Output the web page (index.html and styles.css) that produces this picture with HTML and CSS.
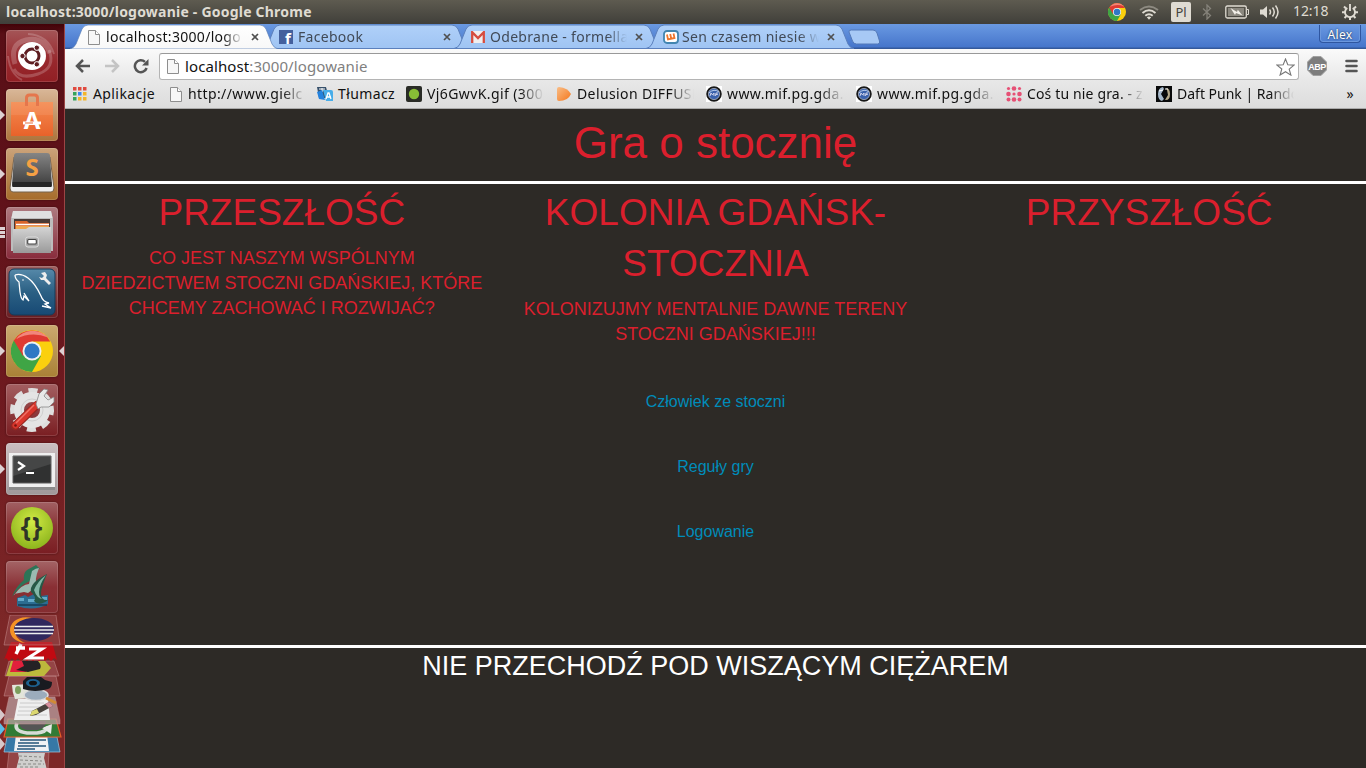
FILE: index.html
```html
<!DOCTYPE html>
<html lang="pl">
<head>
<meta charset="utf-8">
<title>Gra o stocznię</title>
<link rel="stylesheet" href="styles.css">
</head>
<body>
<svg width="0" height="0" class="defs">
  <defs>
    <linearGradient id="tabFill" x1="0" y1="0" x2="0" y2="1"><stop offset="0" stop-color="#b0d0f9"/><stop offset="1" stop-color="#9fc4f3"/></linearGradient>
    <linearGradient id="tabOn" x1="0" y1="0" x2="0" y2="1"><stop offset="0" stop-color="#fff"/><stop offset="1" stop-color="#f8f8f8"/></linearGradient>
    <linearGradient id="bag" x1="0" y1="0" x2="0" y2="1"><stop offset="0" stop-color="#f58b51"/><stop offset="1" stop-color="#e8622a"/></linearGradient>
    <linearGradient id="dark" x1="0" y1="0" x2="0" y2="1"><stop offset="0" stop-color="#858585"/><stop offset="1" stop-color="#3a3a3a"/></linearGradient>
    <linearGradient id="silver" x1="0" y1="0" x2="0" y2="1"><stop offset="0" stop-color="#d4d4d4"/><stop offset="1" stop-color="#9a9a9a"/></linearGradient>
    <linearGradient id="blue" x1="0" y1="0" x2="0" y2="1"><stop offset="0" stop-color="#5689a9"/><stop offset=".5" stop-color="#2b6084"/><stop offset="1" stop-color="#174974"/></linearGradient>
    <radialGradient id="lime" cx=".5" cy=".35" r=".65"><stop offset="0" stop-color="#d2ea45"/><stop offset="1" stop-color="#8db51d"/></radialGradient>
    <linearGradient id="orange" x1="0" y1="0" x2="1" y2="1"><stop offset="0" stop-color="#f9bd86"/><stop offset="1" stop-color="#f4771c"/></linearGradient>
    <symbol id="page" viewBox="0 0 12 15"><path d="M.5.5h7l4 4v10H.5z" fill="#f7f7f7" stroke="#8e8e8e"/><path d="M7.500.5v4h4" fill="#fff" stroke="#8e8e8e"/></symbol>
    <symbol id="chrome" viewBox="0 0 42 42">
      <circle cx="21" cy="21" r="21" fill="#fbd00e"/>
      <path d="M21 21L2.800 10.500A21 21 0 0 0 21 42L30 26z" fill="#3fa545"/>
      <path d="M2.800 10.500A21 21 0 0 1 39.200 11.500H21L12 26z" fill="#df3b32"/>
      <path d="M5 9A21 21 0 0 1 37 7.500Q21 1 5 9" fill="#f2867b"/>
      <circle cx="21" cy="21" r="9.500" fill="#f1f1f1"/><circle cx="21" cy="21" r="7.600" fill="#2f78c4"/>
    </symbol>
    <symbol id="mif" viewBox="0 0 16 16"><path d="M0 0h16v16H0z" fill="#fff"/><circle cx="8" cy="8" r="6.800" fill="#3b62ac" stroke="#171717" stroke-width="2"/><path d="M3 7q5-5 10-1" fill="none" stroke="#b9cdec"/><circle cx="8" cy="8" r="5.600" fill="none" stroke="#b9bcc4" stroke-width=".7"/><path d="M4 10l1-3 1.500 2L8 7v3M9.500 10l.5-3h2M9.800 8.500h2" fill="none" stroke="#dde" stroke-width=".9"/></symbol>
    <symbol id="tabShape" viewBox="0 0 208 25"><path d="M0 24.500Q4 24 6 20L12 5Q14 1 18 1H190Q194 1 196 5L202 20Q204 24 208 24.500z" fill="url(#tabFill)" stroke="#5b80bd"/></symbol>
  </defs>
</svg>

<header class="panel">
  <span class="panel-title">localhost:3000/logowanie - Google Chrome</span>
  <div class="tray">
    <svg class="i-chrome" width="18" height="18"><use href="#chrome"/></svg>
    <svg class="i-wifi" width="20" height="15" viewBox="0 0 20 15" fill="none" stroke-width="1.900"><path d="M1 5Q10-2 19 5" stroke="#8d8a81"/><path d="M3.500 8Q10 2.500 16.500 8M6.300 10.800Q10 7.500 13.700 10.800" stroke="#dfdbd2"/><path d="M7.800 12.200L10 14.800l2.200-2.600q-2.200-1.500-4.400 0z" fill="#dfdbd2"/></svg>
    <span class="lang">Pl</span>
    <svg class="i-bt" width="10" height="16" viewBox="0 0 10 16" fill="none" stroke="#85827a" stroke-width="1.300"><path d="M1 4.500l7.500 7L5 15V1l3.500 3.500-7.500 7"/></svg>
    <svg class="i-bat" width="24" height="14" viewBox="0 0 24 14"><rect x=".8" y="1" width="20.500" height="12" rx="1.500" fill="none" stroke="#dfdbd2" stroke-width="1.300"/><path d="M3 3h16v8H3z" fill="#8b887f"/><path d="M22 4.500h1.500v5H22" fill="none" stroke="#dfdbd2"/><path d="M5.500 3l6.500 4 .8-2.300L17.500 10.500 11 8l-1 2z" fill="#f2efe8"/></svg>
    <svg class="i-vol" width="20" height="16" viewBox="0 0 20 16" fill="none" stroke="#dfdbd2" stroke-width="1.500"><path d="M0 5.500h3l4-3.500v12l-4-3.500H0z" fill="#dfdbd2" stroke="none"/><path d="M9.500 5.500q2 2.500 0 5M12.500 3.500q3.500 4.500 0 9M15.500 1.500q5 6.500 0 13"/></svg>
    <span class="clock">12:18</span>
    <svg class="i-gear" width="16" height="16" viewBox="0 0 16 16" fill="none" stroke="#dfdbd2"><path d="M5.300 4A5 5 0 1 0 10.700 4" stroke-width="1.900"/><path d="M8 0v7" stroke-width="1.900"/><path d="M2 2.500l2 2M14 2.500l-2 2M0 8.300h3M16 8.300h-3M2.500 14l2-2M13.500 14l-2-2M8 13v3" stroke-width="2"/></svg>
  </div>
</header>

<div class="desktop">
<nav class="launcher">
  <div class="tile t-dash"><svg viewBox="0 0 52 52"><g fill="none" stroke="#fff" stroke-opacity=".2"><path d="M9 34Q3 14 20 10t24 13" stroke-width="5"/><path d="M43 20q7 18-11 24T8 39" stroke-width="3"/><path d="M22 4q20 1 26 20M2 26q2 18 14 24" stroke-width="2"/></g><circle cx="26" cy="26" r="14" fill="#fff"/><circle cx="26" cy="26" r="7" fill="none" stroke="#5e1d21" stroke-width="3"/><g fill="#5e1d21" stroke="#fff" stroke-width="1"><circle cx="16.500" cy="26" r="2.700"/><circle cx="30.800" cy="17.700" r="2.700"/><circle cx="30.800" cy="34.300" r="2.700"/></g></svg></div>
  <div class="tile t-soft"><i class="arrow"></i><svg viewBox="0 0 52 52"><path d="M5 13h42v34H5z" fill="url(#bag)"/><path d="M5 13h42v13H5z" fill="#fff" opacity=".08"/><path d="M20.500 17V9q0-3 3-3h5q3 0 3 3v8" fill="none" stroke="#e5764c" stroke-width="3"/><text x="26" y="40" text-anchor="middle" class="g-a" fill="#fff">A</text><path d="M17 32.500h18v3H17z" fill="#fff"/><path d="M19 33.500h8v1h-8z" fill="#e8703c"/></svg></div>
  <div class="tile t-sub"><i class="arrow"></i><svg viewBox="0 0 52 52"><path d="M8 9h36l4 31q0 4-3 4H7q-3 0-3-4z" fill="#eee" stroke="#77624b"/><path d="M11 5h30q3 0 3 3l2 29q0 2-3 2H9q-3 0-3-2L8 8q0-3 3-3z" fill="url(#dark)"/><path d="M6.500 34h39v5h-39z" fill="#262626"/><text x="26" y="28" text-anchor="middle" class="g-s">S</text></svg></div>
  <div class="tile t-files"><i class="arrow triple"></i><svg viewBox="0 0 52 52"><path d="M7 4h38l2 8v32H5V12z" fill="#bdbdbd"/><path d="M7 4h38l1.500 7h-41z" fill="#e0e0e0"/><path d="M8 12h36v13H8z" fill="#4a3a35"/><path d="M9 14h12l2 2h20v9H9z" fill="#d9652b"/><path d="M10 17.500h33" stroke="#fff" stroke-width="1.500"/><path d="M10 19h33v4H10z" fill="#eea84f"/><path d="M7 22h13l3-2h22v26H7z" fill="url(#silver)"/><rect x="19.500" y="30" width="13" height="10" rx="2.500" fill="#a9a9a9" stroke="#ddd"/><rect x="21.700" y="32.500" width="8.600" height="4.500" rx="1" fill="#fff" stroke="#444" stroke-width="1.100"/></svg></div>
  <div class="tile t-sql"><svg viewBox="0 0 52 52"><rect x="3" y="3" width="46" height="46" rx="5" fill="url(#blue)" stroke="#173a57"/><g fill="none" stroke="#fff" stroke-width="1.300"><path d="M9 9q6-2 13 3t13 18q2 6 8 7l-4 1 6 4-9-2M9 9q0 4 4 7l1 10q1 7 3 8l1-4 5 5-5-8"/></g><path d="M35 7l4-1 2 3-1 3 5 5-2 2-5-5-3 0-2-3 3 1 2-2z" fill="#eee"/><circle cx="17" cy="14" r=".8" fill="#fff"/></svg></div>
  <div class="tile t-chrome"><i class="arrow"></i><i class="arrow right"></i><svg viewBox="0 0 52 52"><use href="#chrome" x="5" y="5" width="42" height="42"/></svg></div>
  <div class="tile t-cfg"><svg viewBox="0 0 52 52"><g transform="rotate(-12 26 26)"><circle cx="26" cy="26" r="18.500" fill="none" stroke="#dedede" stroke-width="7" stroke-dasharray="8.500 6.030"/></g><circle cx="26" cy="26" r="13" fill="none" stroke="#e4e4e4" stroke-width="10"/><circle cx="26" cy="26" r="11" fill="none" stroke="#cfcfcf"/><path d="M9 42L31 21" stroke="#962721" stroke-width="8" stroke-linecap="round"/><path d="M9.500 41.500L31 20.500" stroke="#d9362c" stroke-width="6" stroke-linecap="round"/><path d="M10 39L28 21" stroke="#ef7267" stroke-width="1.500"/><path d="M30 20l3-10 5-5 4 1-4 6 4 4 6-3v5l-5 5-8 0-3 2z" fill="#e8e8e8" stroke="#888" stroke-width=".8"/><circle cx="9.500" cy="41.500" r="1.300" fill="#76150f"/></svg></div>
  <div class="tile t-term"><i class="arrow"></i><svg viewBox="0 0 52 52"><path d="M3 10h46v37H3z" fill="#8a8a8a"/><path d="M3 10h46v34H3z" fill="#efefef"/><path d="M7 13h38v27H7z" fill="#303131" stroke="#5d5d5d"/><path d="M7 13h38v8L7 33z" fill="#fff" opacity=".1"/><path d="M12 19l6 4-6 4M20 30h8" fill="none" stroke="#fff" stroke-width="2.200"/></svg></div>
  <div class="tile t-brac"><svg viewBox="0 0 52 52"><circle cx="26" cy="26" r="21" fill="url(#lime)"/><text x="26" y="34" text-anchor="middle" class="g-b">{}</text></svg></div>
  <div class="tile t-drag"><svg viewBox="0 0 52 52"><path d="M11 37l8-3 3 2 8-4 5 3 7-1v9q-14 8-31 2z" fill="#2b6d91"/><path d="M12 37h6v3h-6zM22 38h7v3h-7zM34 36h7v3h-7z" fill="#64aac9"/><path d="M12 44h29" stroke="#153e58" stroke-width="1.500"/><path d="M6 36Q10 25 18 19q-1-7 3-10L30 4l4 4-6 1q-3 5-4 11-10 4-18 16z" fill="#2c7457"/><path d="M8 34q8-11 15-11l3-13q4-3 7-3-5 12-2 18l-9 7-4-1-10 2z" fill="#9bbab1"/><path d="M25 31q-2-9 16-18-6 14-6 19 0 8 7 7-9 7-14 1 3-4-3-9z" fill="#265846"/><path d="M28 29q3-8 12-15-7 10-7 17 0 6 4 7-6 0-9-9z" fill="#83b7a7"/></svg></div>
  <svg class="stack" viewBox="0 0 64 155" width="64" height="155">
    <path d="M9 137h40l-1 18H7z" class="glass"/><path d="M18 138h27l-1 5 3 12H16l3-12z" fill="#cfcfcd"/><path d="M19 141l22 1M20 145l22 1M18 149h26M20 152h20" stroke="#898985" stroke-dasharray="3 2"/>
    <path d="M7 122h50l3 15H4z" fill="#3678a6" stroke="#9fcae3" stroke-width=".7"/><path d="M16 119h31l2 17H14z" fill="#f0f2f4"/><path d="M20 125h26M18 128h21M18 131h28M17 134h18" stroke="#23557a" stroke-width="1.400"/>
    <path d="M8 104h48l5 18H4z" fill="#327b35" stroke="#e65b26" stroke-width="1.200"/><path d="M17 108q-4 8 10 10h10q9-1 11-6" fill="none" stroke="#d6dcd6" stroke-width="3.500"/><path d="M42 113l10-4-1 10z" fill="#e5e8e5"/><path d="M20 106h26q0 7-8 9H26q-8-2-6-9z" fill="#555"/>
    <path d="M9 82h46l5 23v4H4v-4z" class="glass light"/><path d="M18 84h30l2 21H14z" fill="#efefef"/><path d="M20 88h24M19 92h22M18 96h15M17 100h30" stroke="#c2c2c2" stroke-width=".8"/><path d="M30 101l2-5 17-9 4 4-17 9z" fill="#47423c"/><path d="M30 101l2-5 5-2 2 4z" fill="#dcd870"/><path d="M45 89l4-2 4 4-4 2z" fill="#d58e9b"/>
    <path d="M9 61h47l4 20H4z" class="glass"/><path d="M12 70l18-1 2 14-17 1q-3-7-3-14z" fill="#e3e5da"/><ellipse cx="18" cy="75" rx="3" ry="4" fill="#7c9e5c"/>
    <ellipse cx="36" cy="80" rx="12" ry="5.500" fill="#9cacbc" stroke="#ddd" stroke-width="1.500"/><path d="M46 83l10 5" stroke="#d08a35" stroke-width="3"/>
    <path d="M23 66l4-4h14l4 3 7 2q0 6-4 7-13 4-25 0z" fill="#191b20"/><ellipse cx="33" cy="68" rx="7" ry="4" fill="#1d618f"/><ellipse cx="33" cy="68" rx="4" ry="2.300" fill="#111"/>
    <path d="M9 46h45l5 15H5z" class="glass"/><path d="M11 46h34l6 7-7 8H6z" fill="#bdb93c"/><path d="M13 46h17l-4 11H10z" fill="#e1203c"/><path d="M22 46h16q4 4 2 8l-12 3-12-2 8-4z" fill="#252225"/>
    <path d="M11 27h41l5 18-3-2-3 3-3-3-3 3-3-3-3 3-3-3-3 3-3-3-3 3-3-3-3 3-3-3-3 3-3-3-3 3-3-3-2 2z" fill="#c00a12"/>
    <path d="M21 29l-5 10M16 33h9" fill="none" stroke="#fff" stroke-width="3.500"/><path d="M29 34h13L28 43h16" fill="none" stroke="#fff" stroke-width="3"/>
    <path d="M10 0h46l4 30H4z" class="glass clear"/>
    <path d="M32 3C18 0 10 8 10 15s6 12 15 13c-7-3-11-8-10-14S22 5 32 3z" fill="#f59324"/>
    <ellipse cx="34" cy="14.500" rx="20" ry="11.500" fill="#30275e"/><path d="M15 11.500h38M14 15h40M15 18.500h38" stroke="#eee" stroke-width="1.500"/>
    <path d="M0 94l5 6-5 6zM0 123l5 6-5 6z" fill="#d6c8ca"/><path d="M0 108l5 6-5 6z" fill="#5cbde6"/>
  </svg>
</nav>

<section class="browser">
  <div class="tabstrip">
    <div class="tab active"><svg class="shape" viewBox="0 0 208 25"><path d="M0 25Q4 24 6 20L12 5Q14 1 18 1H190Q194 1 196 5L202 20Q204 24 208 25z" fill="url(#tabOn)" stroke="#5a7fb8" stroke-width=".7"/></svg><svg class="fav doc" width="12" height="15"><use href="#page"/></svg><span class="label">localhost:3000/logo</span><svg class="close" viewBox="0 0 8 8"><path d="M1 1l6 6M7 1L1 7"/></svg></div>
    <div class="tab"><svg class="shape"><use href="#tabShape"/></svg><svg class="fav" width="14" height="14" viewBox="0 0 14 14"><path d="M0 0h14v14H0z" fill="#44609d"/><text x="9" y="14" class="g-f" text-anchor="middle">f</text></svg><span class="label">Facebook</span><svg class="close" viewBox="0 0 8 8"><path d="M1 1l6 6M7 1L1 7"/></svg></div>
    <div class="tab"><svg class="shape"><use href="#tabShape"/></svg><svg class="fav" width="14" height="12" viewBox="0 0 14 12"><path d="M0 0h14v12H0z" fill="#f1eeee"/><path d="M1.200 12V1.200L7 7l5.800-5.800V12" fill="none" stroke="#d54c3f" stroke-width="2.300"/></svg><span class="label">Odebrane - formella</span><svg class="close" viewBox="0 0 8 8"><path d="M1 1l6 6M7 1L1 7"/></svg></div>
    <div class="tab"><svg class="shape"><use href="#tabShape"/></svg><svg class="fav wide" width="16" height="14" viewBox="0 0 16 14"><rect x="1" y="1" width="14" height="12" rx="3" fill="#fff" stroke="#4285b0" stroke-width="1.800"/><path d="M4 4.500l1 5 6.500-1.500-1-4.500M7.200 4l1 4.500" fill="none" stroke="#ee762d" stroke-width="1.800"/></svg><span class="label">Sen czasem niesie w</span><svg class="close" viewBox="0 0 8 8"><path d="M1 1l6 6M7 1L1 7"/></svg></div>
    <svg class="newtab" width="32" height="16" viewBox="0 0 32 16"><path d="M3.500 1H25q3 0 4 3l2.500 8q1 3-2 3H8.500Q5.500 15 4.500 12L1 3Q.5 1 3.500 1z" fill="#a7c9f5" stroke="#5379b8"/></svg>
    <span class="user">Alex</span>
  </div>
  <div class="toolbar">
    <div class="navs">
      <svg width="16" height="14" viewBox="0 0 16 14" fill="none" stroke="#555" stroke-width="2.500"><path d="M8 1L2 7l6 6M2 7h13"/></svg>
      <svg width="16" height="14" viewBox="0 0 16 14" fill="none" stroke="#c4c4c4" stroke-width="2.500"><path d="M8 1l6 6-6 6M14 7H1"/></svg>
      <svg width="16" height="16" viewBox="0 0 16 16"><path d="M12 3.800A6 6 0 1 0 13.600 10" fill="none" stroke="#555" stroke-width="2.500"/><path d="M15.500 1v6.500H9z" fill="#555"/></svg>
    </div>
    <div class="omnibox"><svg width="12" height="15"><use href="#page"/></svg><span class="url"><b>localhost</b>:3000/logowanie</span>
      <svg class="star" width="19" height="18" viewBox="0 0 19 18"><path d="M9.500 1l2.300 5.800 6.200.3-4.800 4 1.700 6-5.400-3.400L4.100 17l1.700-6L1 7.100l6.200-.3z" fill="#fff" stroke="#777" stroke-width="1.100"/></svg></div>
    <svg class="abp" width="20" height="20" viewBox="0 0 20 20"><path d="M6 .5h8L19.500 6v8L14 19.500H6L.5 14V6z" fill="#7d7d7d" stroke="#a1a1a1"/><text x="10" y="13.700" text-anchor="middle" class="g-abp">ABP</text></svg>
    <svg class="menu" width="13" height="14" viewBox="0 0 13 14"><path d="M1.500 2h10M1.500 7h10M1.500 12h10" stroke="#555" stroke-width="2.600" stroke-linecap="round"/></svg>
  </div>
  <div class="bookmarks">
    <a class="bm b1"><svg width="14" height="14" viewBox="0 0 14 14"><path d="M0 0h3.500v3.500H0zM5 0h3.500v3.500H5zM10 0h3.500v3.500H10z" fill="#e04a3f"/><path d="M0 5h3.500v3.500H0z" fill="#35a35a"/><path d="M5 5h3.500v3.500H5z" fill="#3b87ee"/><path d="M10 5h3.500v3.500H10zM5 10h3.500v3.500H5zM10 10h3.500v3.500H10z" fill="#f3b52a"/><path d="M0 10h3.500v3.500H0z" fill="#35a35a"/></svg><span>Aplikacje</span></a>
    <a class="bm b2"><svg width="12" height="15"><use href="#page"/></svg><span class="fade">http://www.gielc</span></a>
    <a class="bm b3"><svg width="16" height="16" viewBox="0 0 16 16"><path d="M0 1h9l3 11H2z" fill="#37516b"/><path d="M2 3h6M5 2v3M3 7l4-3" stroke="#fff"/><path d="M0 6l5-2 3 10-6-1z" fill="#2482dd"/><path d="M6 4h8q2 0 2 2v9H9z" fill="#48ade9"/><path d="M9 13l2-6h1l2 6M10 11h4" fill="none" stroke="#fff" stroke-width="1.300"/></svg><span>Tłumacz</span></a>
    <a class="bm b4"><svg width="16" height="16" viewBox="0 0 16 16"><rect width="16" height="16" rx="2" fill="#292b26"/><circle cx="8" cy="8" r="5.200" fill="#87bd36"/></svg><span class="fade">Vj6GwvK.gif (300</span></a>
    <a class="bm b5"><svg width="16" height="16" viewBox="0 0 16 16"><path d="M1 3q0-2 2-2 9 1 12 7-3 7-12 7-2 0-2-2z" fill="url(#orange)"/></svg><span class="fade">Delusion DIFFUSE</span></a>
    <a class="bm b6"><svg width="16" height="16"><use href="#mif"/></svg><span class="fade">www.mif.pg.gda.</span></a>
    <a class="bm b7"><svg width="16" height="16"><use href="#mif"/></svg><span class="fade">www.mif.pg.gda.</span></a>
    <a class="bm b8"><svg width="16" height="16" viewBox="0 0 16 16" fill="#e65075"><circle cx="2.500" cy="2.500" r="1.600"/><circle cx="8" cy="2.500" r="2.300"/><circle cx="13.500" cy="2.500" r="1.600"/><circle cx="2.500" cy="8" r="2.300"/><circle cx="8" cy="8" r="1.600"/><circle cx="13.500" cy="8" r="2.300"/><circle cx="2.500" cy="13.500" r="2"/><circle cx="8" cy="13.500" r="2.300"/><circle cx="13.500" cy="13.500" r="2"/></svg><span class="fade">Coś tu nie gra. - zo</span></a>
    <a class="bm b9"><svg width="16" height="16" viewBox="0 0 16 16"><path d="M0 0h16v16H0z" fill="#090a0b"/><path d="M7 1Q2 2 2 8t4 7l2-2-3-5 3-5z" fill="#a7b9cb"/><path d="M10 2q4 0 4 6t-4 6l-1 0 3-5-1-5z" fill="#b5a98a"/><path d="M3 5l4-1M9 3h3" stroke="#fff"/></svg><span class="fade">Daft Punk | Rando</span></a>
    <span class="more">»</span>
  </div>

  <main class="page">
    <div class="top"><h1>Gra o stocznię</h1></div>
    <div class="row">
      <div class="col"><h2>PRZESZŁOŚĆ</h2><h5>CO JEST NASZYM WSPÓLNYM DZIEDZICTWEM STOCZNI GDAŃSKIEJ, KTÓRE CHCEMY ZACHOWAĆ I ROZWIJAĆ?</h5></div>
      <div class="col"><h2>KOLONIA GDAŃSK-STOCZNIA</h2><h5>KOLONIZUJMY MENTALNIE DAWNE TERENY STOCZNI GDAŃSKIEJ!!!</h5>
        <div class="links"><a>Człowiek ze stoczni</a><a>Reguły gry</a><a>Logowanie</a></div></div>
      <div class="col"><h2>PRZYSZŁOŚĆ</h2></div>
    </div>
    <footer class="bottom"><h3>NIE PRZECHODŹ POD WISZĄCYM CIĘŻAREM</h3></footer>
  </main>
</section>
</div>
</body>
</html>
```
FILE: styles.css
```css
* { box-sizing: border-box; }
body { margin: 0; width: 1366px; height: 768px; overflow: hidden; display: flex; flex-direction: column; font-family: "Noto Sans", "Open Sans", sans-serif; background: #2d2a26; }
.defs { position: absolute; }
svg { display: block; flex: none; }

.panel { height: 24px; flex: none; display: flex; justify-content: space-between; align-items: center; padding: 0 8px 0 6px; background: linear-gradient(#5e5b50, #403f3a); color: #dfdbd2; }
.panel-title { font-weight: 700; font-size: 14px; letter-spacing: .22px; line-height: 24px; white-space: nowrap; }
.tray { display: flex; align-items: center; height: 24px; }
.i-wifi { margin-left: 13px; }
.lang { margin-left: 12px; width: 20px; height: 20px; background: #dfdbd2; border-radius: 2px; color: #45433e; font-size: 13px; line-height: 21px; text-align: center; }
.i-bt { margin-left: 11px; }
.i-bat { margin-left: 13px; }
.i-vol { margin-left: 11px; }
.clock { margin-left: 13px; width: 36px; font-size: 14px; letter-spacing: -.1px; line-height: 22px; margin-bottom: 2px; white-space: nowrap; }
.i-gear { margin-left: 13px; }

.desktop { flex: 1; min-height: 0; display: flex; }
.launcher { width: 65px; flex: none; padding: 6px 0 0 6px; display: flex; flex-direction: column; gap: 7px; border-right: 1px solid #9b4545; background: linear-gradient(#420208, #590f16 10px, #5e1119 150px, #701b20 400px, #7c2727 600px, #7c2727); }
.tile { width: 52px; height: 52px; flex: none; border-radius: 4px; position: relative; box-shadow: inset 0 0 0 1px rgba(255,255,255,.14), 0 0 2px rgba(30,0,0,.6); background: linear-gradient(#a16063, #8b3537 45%, #791d22); }
.tile svg { width: 52px; height: 52px; }
.t-dash { background: linear-gradient(#a45557, #98282d 60%, #911f24); }
.t-soft { background: linear-gradient(#d9b798, #ad743c); }
.t-sub { background: linear-gradient(#cba37a, #a66c2b); }
.t-files { background: linear-gradient(#ae7b80, #882c3c); }
.t-sql { background: linear-gradient(#9e6161, #6a1e23); }
.t-chrome { background: linear-gradient(#cba970, #a98136); }
.t-cfg { background: linear-gradient(#a35f61, #7a1e22); }
.t-term { background: linear-gradient(#cbbfc1, #a0989a); }
.t-drag { background: linear-gradient(#a46466, #892f34 50%, #852d31); }
.arrow { position: absolute; left: -6px; top: 21px; border: solid transparent; border-width: 5px 0 5px 5px; border-left-color: #ddd1d3; }
.arrow.right { left: 53px; border-width: 5px 5px 5px 0; border-right-color: #ddd1d3; }
.arrow.triple { border: 0; width: 5px; height: 11px; top: 20px; background: repeating-linear-gradient(#ddd1d3 0 3px, transparent 3px 4px); }
.stack { margin: -5px 0 0 -6px; }
.glass { fill: #b26a6c; fill-opacity: .45; stroke: #c99293; stroke-width: .7; stroke-opacity: .7; }
.glass.clear { fill-opacity: .3; }
.glass.light { fill: #b9a0a2; fill-opacity: .75; }
.g-a { font: 700 24px "Noto Sans", sans-serif; }
.g-s { font: 700 24px "Noto Sans", sans-serif; fill: #f5a044; }
.g-b { font: 700 26px "Noto Sans", sans-serif; fill: #2f3527; letter-spacing: 1px; }
.g-f { font: 700 15px "Noto Sans", sans-serif; fill: #fff; }
.g-abp { font: 700 9px "Liberation Sans", sans-serif; fill: #fff; letter-spacing: -.5px; }

.browser { flex: 1; min-width: 0; display: flex; flex-direction: column; }
.tabstrip { height: 25px; flex: none; display: flex; background: linear-gradient(#6a99e2, #4676cb 23px, #34599b 24px); padding-left: 5px; }
.tab { position: relative; width: 192px; height: 25px; display: flex; align-items: center; padding: 1px 16px 0 17px; flex: none; color: #414a57; }
.tab > * { position: relative; }
.tab .shape { position: absolute; left: 0; top: 0; width: 208px; height: 25px; }
.tab.active { z-index: 2; color: #111; }
.fav { margin: 0 5px 0 0; }
.fav.doc { margin: 0 6px 0 1px; }
.fav.wide { margin-right: 3px; }
.label { width: 137px; height: 22px; line-height: 22px; font-size: 14px; letter-spacing: .3px; white-space: nowrap; overflow: hidden; -webkit-mask-image: linear-gradient(90deg, #000 calc(100% - 20px), transparent); mask-image: linear-gradient(90deg, #000 calc(100% - 20px), transparent); }
.tab .close { position: absolute; left: 181px; top: 9px; width: 8px; height: 8px; fill: none; stroke: #505050; stroke-width: 1.700; }
.newtab { margin: 5px 0 0 10px; }
.user { margin: 1px 5px 0 auto; width: 42px; height: 18px; border: 1px solid #2f56a0; border-top: 0; border-radius: 0 0 4px 4px; box-shadow: inset 0 0 0 1px #6c98dd; color: #fff; font-size: 12px; letter-spacing: .3px; line-height: 19px; text-align: center; text-shadow: 0 0 2px #123; }
.toolbar { height: 31px; flex: none; display: flex; align-items: center; background: linear-gradient(#fafafa, #e8e8e8); padding: 4px 9px 0 10px; }
.navs { display: flex; align-items: center; gap: 13px; width: 84px; margin-top: -1px; flex: none; }
.omnibox { width: 1140px; height: 27px; flex: none; border: 1px solid #b4b4b4; border-top-color: #999; border-radius: 3px; background: #fff; display: flex; align-items: center; padding: 0 3px 0 7px; }
.url { margin-left: 6px; font-size: 15px; letter-spacing: .1px; line-height: 22px; margin-bottom: 2px; color: #808080; flex: 1; }
.url b { color: #111; font-weight: 400; }
.abp { margin: -2px 0 0 8px; }
.menu { margin: -2px 0 0 18px; }
.bookmarks { height: 29px; flex: none; display: flex; align-items: center; background: linear-gradient(#e8e8e8, #dcdcdc); border-bottom: 1px solid #aaa; padding-left: 8px; font-size: 14px; letter-spacing: .4px; color: #111; }
.bm { display: flex; align-items: center; gap: 5px; white-space: nowrap; flex: none; line-height: 20px; }
.bm .fade { flex: 1; overflow: hidden; -webkit-mask-image: linear-gradient(90deg, #000 calc(100% - 24px), transparent); mask-image: linear-gradient(90deg, #000 calc(100% - 24px), transparent); }
.b1 { width: 97px; gap: 6px; }
.b2 { width: 136px; gap: 6px; margin-right: 11px; }
.b3 { width: 89px; }
.b4, .b5, .b6, .b7, .b8 { width: 138px; margin-right: 12px; }
.b8 { letter-spacing: .15px; }
.b9 { width: 138px; letter-spacing: 0; }
.more { margin: -2px 12px 0 auto; }

.page { flex: 1; min-height: 0; background: #2d2a26; font-family: "Liberation Sans", Arial, sans-serif; text-align: center; color: #db1f2d; display: flex; flex-direction: column; }
h1, h2, h3, h5 { margin: 0; font-weight: 400; line-height: 1.4; }
.top { height: 75px; flex: none; border-bottom: 3px solid #fff; padding-top: 3px; }
h1 { font-size: 44px; }
.row { height: 461px; flex: none; display: flex; }
.col { flex: 1 1 0; padding: 3px 15px 0; }
h2 { font-size: 37px; margin-bottom: 8px; line-height: 51px; }
h5 { font-size: 18px; line-height: 25px; }
.links { display: flex; flex-direction: column; gap: 41px; margin-top: 43px; font-size: 16px; line-height: 24px; color: #008cba; }
.bottom { border-top: 3px solid #fff; flex: 1; color: #fff; }
h3 { font-size: 27px; line-height: 37px; }
```
